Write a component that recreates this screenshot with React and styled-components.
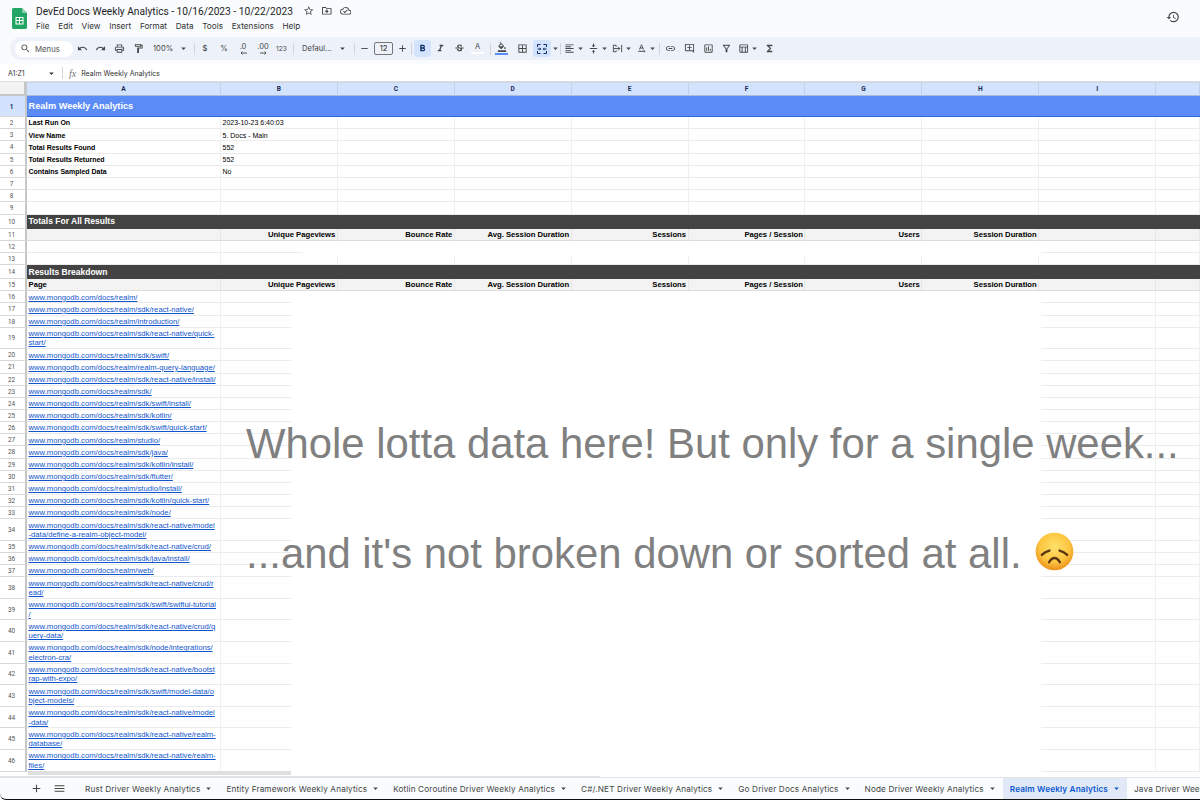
import React from 'react'
import styled, { createGlobalStyle } from 'styled-components'
import {
  MdAdd, MdArrowDropDown, MdBorderAll, MdFormatAlignLeft, MdFormatBold, MdFormatColorFill,
  MdFormatItalic, MdFunctions, MdHistory, MdLink, MdMenu, MdOutlineAddComment, MdOutlineCloudDone,
  MdOutlineDriveFileMove, MdOutlineFilterAlt, MdOutlineFormatPaint, MdOutlineInsertChart, MdOutlinePrint,
  MdOutlineTableChart, MdRedo, MdRemove, MdSearch, MdStarBorder, MdStrikethroughS, MdTextRotationNone,
  MdUndo, MdVerticalAlignCenter,
} from 'react-icons/md'

const GlobalStyle = createGlobalStyle`
  html, body { margin: 0; padding: 0; background: #fff; }
  body { font-family: "Roboto", "Liberation Sans", sans-serif; }
`

const Page = styled.div`
  width: 1200px;
  height: 800px;
  overflow: hidden;
  display: flex;
  flex-direction: column;
  background: #fff;
  color: #444746;
`

const TitleBar = styled.header`
  height: 37px;
  flex: none;
  background: #f9fbfd;
  display: flex;
  align-items: flex-start;
  padding: 8px 20px 0 12px;
  box-sizing: border-box;
`
const Logo = styled.svg`
  width: 15px;
  height: 21px;
  flex: none;
`
const TitleBlock = styled.div`
  margin: -4px 0 0 9px;
  flex: 1;
`
const TitleLine = styled.div`
  display: flex;
  align-items: center;
  height: 14px;
  font-family: "Roboto", sans-serif;
  font-size: 10.2px;
  color: #1f1f1f;
  white-space: nowrap;
  svg { font-size: 11.5px; color: #444746; margin-left: 7px; flex: none; }
  span { margin-right: 3px; }
`
const MenuLine = styled.nav`
  display: flex;
  gap: 8.7px;
  margin-top: 3px;
  font-family: "Inter", sans-serif;
  font-size: 8.2px;
  line-height: 10px;
  color: #333;
`
const HistoryIcon = styled(MdHistory)`
  font-size: 14px;
  color: #444746;
  margin: 2px 0 0 0;
`

const ToolbarWrap = styled.div`
  height: 27px;
  flex: none;
  background: #f9fbfd;
  box-sizing: border-box;
  padding: 0 0 4px 10px;
`
const Toolbar = styled.div`
  height: 23px;
  background: #edf2fa;
  border-radius: 12px 0 0 12px;
  padding-left: 5px;
  display: flex;
  align-items: center;
  font-family: "Inter", sans-serif;
  font-size: 7.6px;
  color: #444746;
`
const MenusSearch = styled.div`
  width: 58px;
  height: 16px;
  box-sizing: border-box;
  padding-left: 5px;
  background: #fff;
  border-radius: 8px;
  display: flex;
  align-items: center;
  gap: 4px;
  font-size: 7.8px;
  color: #555;
  svg { font-size: 11px; }
`
const Tool = styled.div`
  width: ${(p) => p.$w}px;
  height: 17px;
  flex: none;
  display: flex;
  align-items: center;
  justify-content: ${(p) => (p.$start ? 'flex-start' : 'center')};
  padding-left: ${(p) => p.$pad || 0}px;
  box-sizing: border-box;
  border-radius: 3px;
  background: ${(p) => (p.$on ? '#d3e3fd' : 'transparent')};
  color: ${(p) => (p.$on ? '#0b2f66' : '#444746')};
  font-size: ${(p) => p.$size || 11}px;
  svg { flex: none; }
`
const Caret = styled(MdArrowDropDown)`
  font-size: 11px;
  margin-left: ${(p) => p.$left || 0}px;
`
const ToolText = styled.span`
  font-size: ${(p) => p.$size || 7.6}px;
  font-weight: ${(p) => p.$weight || 400};
`
const Sep = styled.i`
  width: 1px;
  height: 12px;
  flex: none;
  background: #d2d4d6;
  margin: 0 ${(p) => p.$right || 0}px 0 ${(p) => p.$left || 0}px;
`
const SizeBox = styled.div`
  width: 19px;
  height: 13px;
  margin-left: 1px;
  flex: none;
  box-sizing: border-box;
  border: 1px solid #747775;
  border-radius: 2px;
  display: flex;
  align-items: center;
  justify-content: center;
  font-size: 7.6px;
  color: #222;
`
const ColorTool = styled.div`
  display: flex;
  flex-direction: column;
  align-items: center;
  line-height: 8px;
  font-size: 7.5px;
  b { font-weight: 400; }
`
const ColorBar = styled.i`
  display: block;
  width: ${(p) => p.$w}px;
  height: 2px;
  margin-top: 1px;
  background: ${(p) => p.$color};
`

const FormulaBar = styled.div`
  height: 18px;
  flex: none;
  box-sizing: border-box;
  background: #fff;
  border-bottom: 1px solid #dadce0;
  display: flex;
  align-items: center;
  padding: 1px 0 0 8px;
  font-family: "Inter", sans-serif;
  font-size: 7px;
  color: #333;
`
const NameBox = styled.div`
  width: 38px;
`
const FxMark = styled.span`
  margin: 0 5px 0 6px;
  font-family: "Liberation Serif", serif;
  font-style: italic;
  font-size: 10px;
  color: #777;
`

const Sheet = styled.main`
  position: relative;
  flex: 1;
  overflow: hidden;
  background: #fff;
`
const Row = styled.div`
  display: grid;
  grid-template-columns: 27px 194px repeat(8, 116.9px) 1fr;
  height: ${(p) => p.$h}px;
`
const RowHead = styled.div`
  box-sizing: border-box;
  border-right: 2px solid #c4c7c5;
  border-bottom: 1px solid #d8d8d8;
  background: ${(p) => (p.$on ? '#d3e3fd' : '#fff')};
  color: ${(p) => (p.$on ? '#0b2f66' : '#555')};
  font-weight: ${(p) => (p.$on ? 700 : 400)};
  font-size: 6.4px;
  display: flex;
  align-items: center;
  justify-content: center;
  padding: 1px 2px 0 0;
`
const Corner = styled(RowHead)`
  background: #f3f3f3;
  border-bottom: 2px solid #c4c7c5;
  border-right: 3px solid #c4c7c5;
`
const ColHead = styled.div`
  box-sizing: border-box;
  background: #d3e3fd;
  border-right: 1px solid #c3d1e8;
  border-top: 1px solid #d0d7e4;
  border-bottom: 1px solid #a9bbdb;
  color: #1a2a55;
  font-size: 6.6px;
  font-weight: 700;
  display: flex;
  align-items: center;
  justify-content: center;
`
const Cell = styled.div`
  box-sizing: border-box;
  border-right: 1px solid ${(p) => (p.$head ? '#e6e6e6' : '#f0f0f0')};
  border-bottom: 1px solid ${(p) => (p.$head ? '#dcdcdc' : '#ebebeb')};
  background: ${(p) => (p.$head ? '#f3f3f3' : '#fff')};
  display: flex;
  align-items: center;
  justify-content: ${(p) => (p.$right ? 'flex-end' : 'flex-start')};
  padding: 1px 1.5px 0;
  overflow: hidden;
  font-family: "Liberation Sans", sans-serif;
  font-size: ${(p) => p.$size || 7.7}px;
  line-height: 9.4px;
  font-weight: ${(p) => (p.$bold ? 700 : 400)};
  color: #000;
  white-space: nowrap;
`
const PageLink = styled.a`
  color: #1155cc;
  text-decoration: underline;
`
const Band = styled.div`
  grid-column: 2 / -1;
  box-sizing: border-box;
  background: ${(p) => p.$bg};
  border-bottom: 1px solid ${(p) => p.$line};
  display: flex;
  align-items: center;
  padding-left: 1.5px;
  font-family: "Liberation Sans", sans-serif;
  font-weight: 700;
  font-size: ${(p) => p.$size}px;
  color: #fff;
`

const Scrollbar = styled.div`
  position: absolute;
  left: 28px;
  bottom: 2px;
  width: 263px;
  height: 4px;
  background: #dfdfdf;
`
const BottomLine = styled.div`
  position: absolute;
  left: 0;
  bottom: 0;
  width: 600px;
  height: 1px;
  background: #e2e2e2;
`
const Cover = styled.div`
  position: absolute;
  background: #fff;
`
const CoverLower = styled(Cover)`
  left: 291px;
  top: 209.5px;
  width: 750px;
  bottom: 1px;
`
const CoverUpper = styled(Cover)`
  left: 303px;
  top: 159px;
  width: 738px;
  height: 15px;
`
const Note = styled.div`
  position: absolute;
  left: 246px;
  top: 334px;
  font-family: "Liberation Sans", sans-serif;
  font-size: 41.85px;
  line-height: 55px;
  color: #808080;
  white-space: nowrap;
`
const NoteLine = styled.div`
  display: flex;
  align-items: center;
  height: 55px;
`
const Emoji = styled.svg`
  width: 39px;
  height: 39px;
  margin: 0 0 5px 13px;
  flex: none;
`

const TabBar = styled.footer`
  height: 23px;
  flex: none;
  position: relative;
  box-sizing: border-box;
  background: #f9fbfd;
  border-top: 1px solid #e3e3e3;
  border-bottom: 1px solid #111;
  display: flex;
  align-items: stretch;
  padding-left: 30px;
  overflow: hidden;
  border-bottom-left-radius: 6px;
  font-family: "Inter", sans-serif;
  font-size: 8.2px;
  color: #444746;
  white-space: nowrap;
`
const TabIcon = styled.div`
  width: ${(p) => p.$w}px;
  flex: none;
  display: flex;
  align-items: center;
  font-size: 13px;
`
const Tab = styled.div`
  flex: none;
  display: flex;
  align-items: center;
  box-sizing: border-box;
  padding: 0 5px 0 7px;
  gap: 3px;
  letter-spacing: 0.15px;
  background: ${(p) => (p.$active ? '#e1e9f7' : 'transparent')};
  color: ${(p) => (p.$active ? '#0b57d0' : '#444746')};
  font-weight: ${(p) => (p.$active ? 600 : 400)};
  svg { font-size: 11px; flex: none; }
`

const BASE = 'www.mongodb.com/docs/realm/'
const LINKS = [
  '', 'sdk/react-native/', 'introduction/', 'sdk/react-native/quick-|start/', 'sdk/swift/',
  'realm-query-language/', 'sdk/react-native/install/', 'sdk/', 'sdk/swift/install/', 'sdk/kotlin/',
  'sdk/swift/quick-start/', 'studio/', 'sdk/java/', 'sdk/kotlin/install/', 'sdk/flutter/', 'studio/install/',
  'sdk/kotlin/quick-start/', 'sdk/node/', 'sdk/react-native/model|-data/define-a-realm-object-model/',
  'sdk/react-native/crud/', 'sdk/java/install/', 'web/', 'sdk/react-native/crud/r|ead/',
  'sdk/swift/swiftui-tutorial|/', 'sdk/react-native/crud/q|uery-data/', 'sdk/node/integrations/|electron-cra/',
  'sdk/react-native/bootst|rap-with-expo/', 'sdk/swift/model-data/o|bject-models/',
  'sdk/react-native/model|-data/', 'sdk/react-native/realm-|database/', 'sdk/react-native/realm-|files/',
]
const INFO = [
  ['Last Run On', '2023-10-23 6:40:03'],
  ['View Name', '5. Docs - Main'],
  ['Total Results Found', '552'],
  ['Total Results Returned', '552'],
  ['Contains Sampled Data', 'No'],
  ['', ''], ['', ''], ['', ''],
]
const METRICS = ['Unique Pageviews', 'Bounce Rate', 'Avg. Session Duration', 'Sessions', 'Pages / Session', 'Users', 'Session Duration']
const COLUMNS = ['A', 'B', 'C', 'D', 'E', 'F', 'G', 'H', 'I', '']
const TABS = [
  'Rust Driver Weekly Analytics', 'Entity Framework Weekly Analytics', 'Kotlin Coroutine Driver Weekly Analytics',
  'C#/.NET Driver Weekly Analytics', 'Go Driver Docs Analytics', 'Node Driver Weekly Analytics',
  'Realm Weekly Analytics', 'Java Driver Weekly Analytics',
]
const MENUS = ['File', 'Edit', 'View', 'Insert', 'Format', 'Data', 'Tools', 'Extensions', 'Help']

const EmptyCells = ({ count, head }) =>
  Array.from({ length: count }, (_, i) => <Cell key={i} $head={head} />)

const MetricRow = ({ n, first }) => (
  <Row $h={12.2}>
    <RowHead>{n}</RowHead>
    <Cell $head $bold>{first}</Cell>
    {METRICS.map((m) => <Cell key={m} $head $bold $right>{m}</Cell>)}
    <EmptyCells count={2} head />
  </Row>
)

const BlankRow = ({ n }) => (
  <Row $h={12.2}>
    <RowHead>{n}</RowHead>
    <EmptyCells count={10} />
  </Row>
)

const LinkRow = ({ n, path }) => {
  const [one, two] = (BASE + path).split('|')
  return (
    <Row $h={two ? 21.6 : 12.15}>
      <RowHead>{n}</RowHead>
      <Cell>
        <PageLink>{one}{two && <br />}{two}</PageLink>
      </Cell>
      <EmptyCells count={9} />
    </Row>
  )
}

const MergeIcon = () => (
  <svg width="12" height="12" viewBox="0 0 24 24" fill="none" stroke="#0b2f66" strokeWidth="2">
    <path d="M3 8V3h6M15 3h6v5M21 16v5h-6M9 21H3v-5M3 12h6M7 9.5 9.5 12 7 14.5M21 12h-6M17 9.5 14.5 12l2.5 2.5" />
  </svg>
)

const ClipIcon = () => (
  <svg width="11" height="11" viewBox="0 0 24 24" fill="none" stroke="#444746" strokeWidth="2">
    <path d="M3 4v16M21 4v16M4 12h13M13 8l4 4-4 4" />
    <path d="M4 5h5v3M4 19h5v-3" />
  </svg>
)

const DecimalTool = ({ label, arrow }) => (
  <ColorTool>
    <b>{label}</b>
    <svg width="9" height="4" viewBox="0 0 9 4" fill="none" stroke="#444746" strokeWidth="0.9">
      <path d={arrow} />
    </svg>
  </ColorTool>
)

const SadEmoji = () => (
  <Emoji viewBox="0 0 40 40">
    <defs>
      <radialGradient id="face" cx="50%" cy="38%" r="60%">
        <stop offset="0%" stopColor="#ffe06a" />
        <stop offset="65%" stopColor="#fcc640" />
        <stop offset="100%" stopColor="#ee951f" />
      </radialGradient>
    </defs>
    <circle cx="20" cy="20" r="19.3" fill="url(#face)" />
    <path d="M7 23.500c2.400-2.500 4.800-3.800 7.800-4.500M33 23.500c-2.400-2.500-4.800-3.800-7.800-4.500" fill="none" stroke="#5a3413" strokeWidth="2.400" strokeLinecap="round" />
    <path d="M14.500 31c1.600-3 3.400-4.300 5.500-4.300s3.900 1.300 5.500 4.300" fill="none" stroke="#5a3413" strokeWidth="2.400" strokeLinecap="round" />
  </Emoji>
)

export default function App() {
  return (
    <Page>
      <GlobalStyle />
      <TitleBar>
        <Logo viewBox="0 0 15 21">
          <path d="M1.500 0H10l5 5v14.500a1.500 1.500 0 0 1-1.500 1.500h-12A1.500 1.500 0 0 1 0 19.500v-18A1.500 1.500 0 0 1 1.500 0z" fill="#23a566" />
          <path d="M10 0l5 5h-3.500A1.500 1.500 0 0 1 10 3.500z" fill="#8ed1b1" />
          <path d="M3.500 9h8v7.500h-8zM4.500 10v2.100h2.500V10zm3.500 0v2.100h2.500V10zm-3.500 3.100v2.400h2.500v-2.400zm3.500 0v2.400h2.500v-2.400z" fill="#fff" fillRule="evenodd" />
        </Logo>
        <TitleBlock>
          <TitleLine>
            <span>DevEd Docs Weekly Analytics - 10/16/2023 - 10/22/2023</span>
            <MdStarBorder />
            <MdOutlineDriveFileMove />
            <MdOutlineCloudDone />
          </TitleLine>
          <MenuLine>{MENUS.map((m) => <span key={m}>{m}</span>)}</MenuLine>
        </TitleBlock>
        <HistoryIcon />
      </TitleBar>

      <ToolbarWrap>
        <Toolbar>
          <MenusSearch><MdSearch />Menus</MenusSearch>
          <Tool $w={18}><MdUndo /></Tool>
          <Tool $w={19}><MdRedo /></Tool>
          <Tool $w={19}><MdOutlinePrint /></Tool>
          <Tool $w={18}><MdOutlineFormatPaint /></Tool>
          <Tool $w={47} $start $pad={6}><ToolText>100%</ToolText><Caret $left={5} /></Tool>
          <Sep />
          <Tool $w={20}><ToolText $weight={500}>$</ToolText></Tool>
          <Tool $w={18}><ToolText>%</ToolText></Tool>
          <Tool $w={20}><DecimalTool label=".0" arrow="M8 2H2M3.500 .5 2 2l1.500 1.500" /></Tool>
          <Tool $w={20}><DecimalTool label=".00" arrow="M1 2h6M5.500 .5 7 2 5.500 3.500" /></Tool>
          <Tool $w={17}><ToolText $size={6.6}>123</ToolText></Tool>
          <Sep $left={3} />
          <Tool $w={55} $start $pad={8}><ToolText>Defaul...</ToolText><Caret $left={5} /></Tool>
          <Sep $left={5} />
          <Tool $w={18}><MdRemove /></Tool>
          <SizeBox>12</SizeBox>
          <Tool $w={18}><MdAdd /></Tool>
          <Sep $right={2} />
          <Tool $w={17} $on><MdFormatBold /></Tool>
          <Tool $w={19}><MdFormatItalic /></Tool>
          <Tool $w={18}><MdStrikethroughS /></Tool>
          <Tool $w={19}><ColorTool><b>A</b><ColorBar $w={13} $color="#fff" /></ColorTool></Tool>
          <Sep $left={3} />
          <Tool $w={21}><ColorTool><MdFormatColorFill size={10} /><ColorBar $w={13} $color="#5b8cf6" /></ColorTool></Tool>
          <Tool $w={21}><MdBorderAll /></Tool>
          <Tool $w={18} $on><MergeIcon /></Tool>
          <Tool $w={9}><Caret /></Tool>
          <Sep />
          <Tool $w={26} $start $pad={3}><MdFormatAlignLeft /><Caret /></Tool>
          <Tool $w={24} $start $pad={1}><MdVerticalAlignCenter /><Caret /></Tool>
          <Tool $w={24} $start $pad={1}><ClipIcon /><Caret /></Tool>
          <Tool $w={24} $start $pad={1}><MdTextRotationNone /><Caret /></Tool>
          <Sep />
          <Tool $w={20}><MdLink /></Tool>
          <Tool $w={19}><MdOutlineAddComment /></Tool>
          <Tool $w={18}><MdOutlineInsertChart /></Tool>
          <Tool $w={18}><MdOutlineFilterAlt /></Tool>
          <Tool $w={28} $start $pad={3}><MdOutlineTableChart /><Caret /></Tool>
          <Tool $w={13}><MdFunctions /></Tool>
        </Toolbar>
      </ToolbarWrap>

      <FormulaBar>
        <NameBox>A1:Z1</NameBox>
        <Caret />
        <Sep $left={5} />
        <FxMark>fx</FxMark>
        Realm Weekly Analytics
      </FormulaBar>

      <Sheet>
        <Row $h={14}>
          <Corner />
          {COLUMNS.map((c, i) => <ColHead key={i}>{c}</ColHead>)}
        </Row>
        <Row $h={21}>
          <RowHead $on>1</RowHead>
          <Band $bg="#5b8cf6" $line="#3367d6" $size={9.2}>Realm Weekly Analytics</Band>
        </Row>
        {INFO.map(([label, value], i) => (
          <Row $h={12.2} key={i}>
            <RowHead>{i + 2}</RowHead>
            <Cell $bold $size={7}>{label}</Cell>
            <Cell $size={7}>{value}</Cell>
            <EmptyCells count={8} />
          </Row>
        ))}
        <Row $h={14}>
          <RowHead>10</RowHead>
          <Band $bg="#434343" $line="#434343" $size={8.5}>Totals For All Results</Band>
        </Row>
        <MetricRow n={11} first="" />
        <BlankRow n={12} />
        <BlankRow n={13} />
        <Row $h={14}>
          <RowHead>14</RowHead>
          <Band $bg="#434343" $line="#434343" $size={8.5}>Results Breakdown</Band>
        </Row>
        <MetricRow n={15} first="Page" />
        {LINKS.map((path, i) => <LinkRow key={i} n={i + 16} path={path} />)}

        <CoverUpper />
        <CoverLower />
        <Scrollbar />
        <BottomLine />
        <Note>
          <NoteLine>Whole lotta data here! But only for a single week...</NoteLine>
          <NoteLine />
          <NoteLine>...and it's not broken down or sorted at all. <SadEmoji /></NoteLine>
        </Note>
      </Sheet>

      <TabBar>
        <TabIcon $w={23}><MdAdd /></TabIcon>
        <TabIcon $w={25}><MdMenu /></TabIcon>
        {TABS.map((t) => (
          <Tab key={t} $active={t === 'Realm Weekly Analytics'}>{t}<MdArrowDropDown /></Tab>
        ))}
      </TabBar>
    </Page>
  )
}
